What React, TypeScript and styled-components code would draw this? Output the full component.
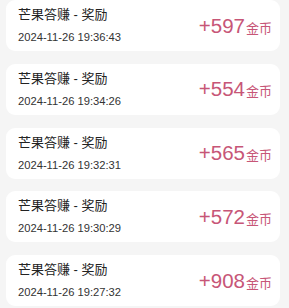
import styled, { createGlobalStyle } from "styled-components";

const GlobalStyle = createGlobalStyle`
  body {
    margin: 0;
    background: #f5f5f5;
    font-family: "Liberation Sans", Arial, "Noto Sans CJK SC", sans-serif;
  }
`;

const List = styled.div`
  display: flex;
  flex-direction: column;
  gap: 12.75px;
  padding: 0 9px 0 6px;
`;

const Card = styled.div`
  height: 51px;
  box-sizing: border-box;
  background: #fff;
  border-radius: 9px;
  padding: 6px 8px 0 12px;
  display: flex;
  align-items: flex-start;
  justify-content: space-between;
`;

const Info = styled.div`
  display: flex;
  flex-direction: column;
`;

const Title = styled.div`
  font-size: 13px;
  line-height: 18px;
  color: #222;
`;

const Time = styled.div`
  margin-top: 5px;
  font-size: 11.2px;
  line-height: 16px;
  color: #333;
`;

const Amount = styled.div`
  align-self: center;
  margin-top: -6px;
  color: #c75677;
  font-size: 20.5px;
  display: flex;
  align-items: baseline;
`;

const Unit = styled.span`
  font-size: 13px;
  margin-left: 1px;
`;

const records = [
  { time: "2024-11-26 19:36:43", coins: 597 },
  { time: "2024-11-26 19:34:26", coins: 554 },
  { time: "2024-11-26 19:32:31", coins: 565 },
  { time: "2024-11-26 19:30:29", coins: 572 },
  { time: "2024-11-26 19:27:32", coins: 908 },
];

export default function App() {
  return (
    <>
      <GlobalStyle />
      <List>
        {records.map((r) => (
          <Card key={r.time}>
            <Info>
              <Title>芒果答赚 - 奖励</Title>
              <Time>{r.time}</Time>
            </Info>
            <Amount>
              +{r.coins}
              <Unit>金币</Unit>
            </Amount>
          </Card>
        ))}
      </List>
    </>
  );
}
